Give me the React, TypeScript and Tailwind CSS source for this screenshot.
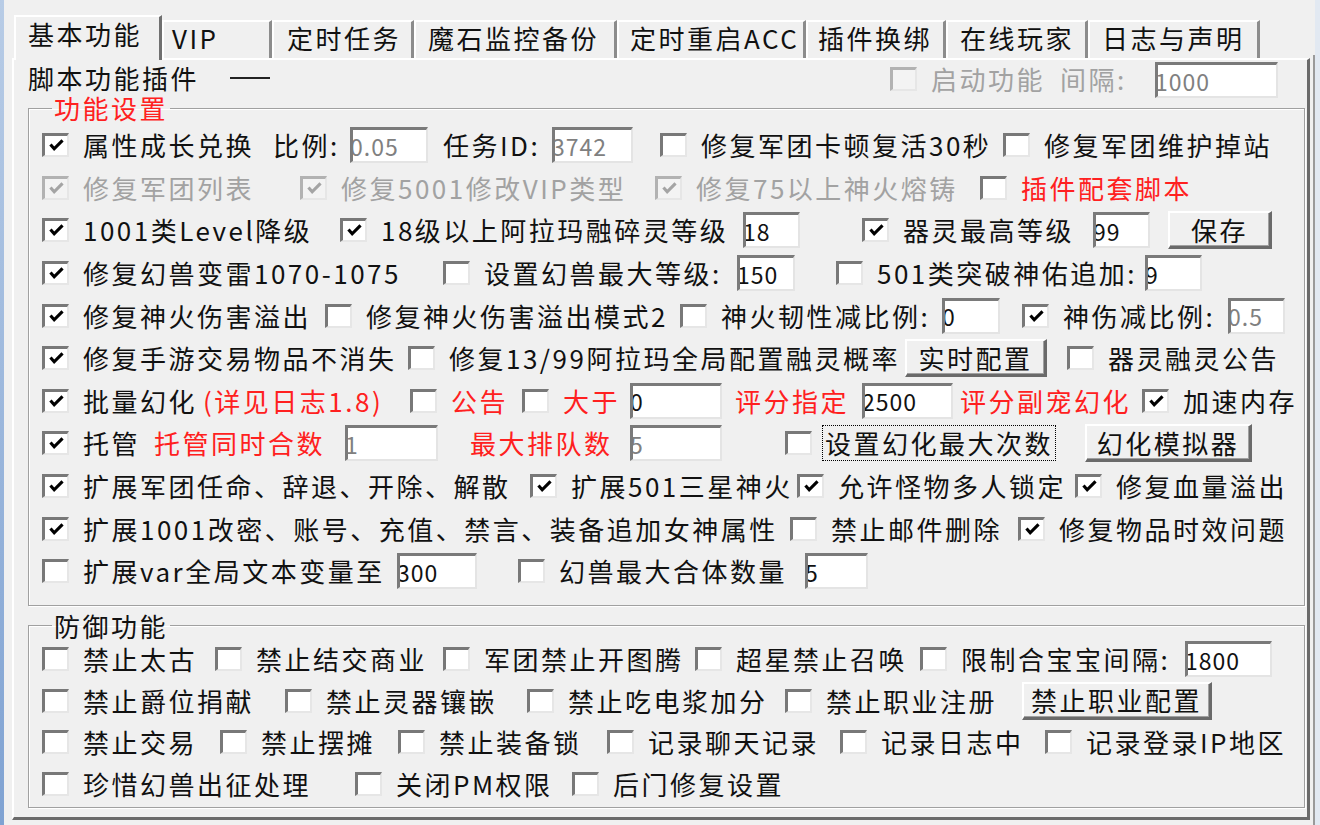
import type { ReactNode } from 'react';

const Box = ({ on, dis }: { on?: boolean; dis?: boolean }) => (
  <span
    className={`flex h-[24px] w-[27px] shrink-0 items-center justify-center border-t-[3px] border-l-[3px] border-r-2 border-b-2 border-r-[#e6e6e6] border-b-[#e6e6e6] ${
      dis ? 'border-t-[#b2b2b2] border-l-[#b2b2b2] bg-[#f3f3f3]' : 'border-t-[#787878] border-l-[#787878] bg-white'
    }`}
  >
    {on && (
      <svg viewBox="0 0 16 14" className="h-[13px] w-[15px]">
        <path d="M1.5 6 L5.5 10.5 L14.5 1.5" fill="none" stroke={dis ? '#a4a4a4' : '#000'} strokeWidth="3.4" />
      </svg>
    )}
  </span>
);

const Chk = ({ w = '', on, dis, children }: { w?: string; on?: boolean; dis?: boolean; children: ReactNode }) => (
  <div className={`flex shrink-0 items-center ${w}`}>
    <Box on={on} dis={dis} />
    <span className={`ml-[14px] whitespace-nowrap ${dis ? 'text-[#a2a2a2]' : ''}`}>{children}</span>
  </div>
);

const C = ({ w, children }: { w: string; children?: ReactNode }) => (
  <div className={`flex shrink-0 items-center whitespace-nowrap ${w}`}>{children}</div>
);

const R = ({ children, className = '' }: { children: ReactNode; className?: string }) => (
  <span className={`whitespace-nowrap text-[#ff2020] ${className}`}>{children}</span>
);

const Field = ({ w, v, dim }: { w: string; v: string; dim?: boolean }) => (
  <span
    className={`flex h-[36px] shrink-0 items-center overflow-hidden border-t-[3px] border-l-[3px] border-r-2 border-b-2 border-t-[#7a7a7a] border-l-[#7a7a7a] border-r-[#e4e4e4] border-b-[#e4e4e4] bg-white text-[23px] tracking-[1px] ${
      dim ? 'text-[#808080]' : 'text-[#111]'
    } ${w}`}
  >
    <span className="-ml-[3px]">{v}</span>
  </span>
);

const Btn = ({ w, children }: { w: string; children: ReactNode }) => (
  <span
    className={`flex h-[38px] shrink-0 items-center justify-center border-t-2 border-l-2 border-r-[3px] border-b-[3px] border-t-white border-l-white border-r-[#6a6a6a] border-b-[#6a6a6a] bg-[#f0f0f0] shadow-[inset_-1px_-1px_0_#a0a0a0] ${w}`}
  >
    {children}
  </span>
);

const Row = ({ h, children }: { h: string; children: ReactNode }) => (
  <div className={`flex items-center ${h}`}>{children}</div>
);

const tabs = [
  { t: 'VIP', cls: 'w-[110px] pl-[8px]' },
  { t: '定时任务', cls: 'w-[142px] pl-[13px]' },
  { t: '魔石监控备份', cls: 'w-[203px] pl-[12px]' },
  { t: '定时重启ACC', cls: 'w-[189px] pl-[11px]' },
  { t: '插件换绑', cls: 'w-[140px] pl-[10px]' },
  { t: '在线玩家', cls: 'w-[142px] pl-[12px]' },
  { t: '日志与声明', cls: 'w-[172px] pl-[12px]' },
];

export default function App() {
  return (
    <div className="flex h-[825px] w-[1320px] overflow-hidden bg-[#f0f0f0] font-['Noto_Sans_CJK_SC','Noto_Sans',sans-serif] text-[26px] leading-[30px] tracking-[2.5px] text-[#111]">
      {/* window edge */}
      <div className="w-[4px] shrink-0 bg-gradient-to-b from-[#b8cce6] to-[#7fa2d2]" />

      <div className="ml-[8px] shrink-0 pt-[15px]">
        {/* tab strip */}
        <div className="flex h-[43px] items-end pl-[2px]">
          <div className="relative z-10 -mb-[2px] flex h-[45px] w-[148px] shrink-0 items-center border-t-2 border-l-2 border-r-[3px] border-t-white border-l-white border-r-[#707070] bg-[#f0f0f0] pl-[12px] pb-[9px]">
            基本功能
          </div>
          {tabs.map((tab) => (
            <div
              key={tab.t}
              className={`flex h-[38px] shrink-0 items-center whitespace-nowrap border-t-2 border-l-2 border-r-[3px] border-t-white border-l-white border-r-[#8c8c8c] pb-[5px] ${tab.cls}`}
            >
              {tab.t}
            </div>
          ))}
        </div>

        {/* tab panel */}
        <div className="h-[762px] w-[1298px] border-t-2 border-l-2 border-r-[3px] border-b-[3px] border-t-white border-l-white border-r-[#6a6a6a] border-b-[#6a6a6a] pt-[2px]">
          <div className="flex h-[36px] items-center pl-[14px]">
            <C w="w-[202px] pb-[5px]">脚本功能插件</C>
            <span className="mb-[4px] h-[2px] w-[40px] shrink-0 bg-[#222]" />
            <span className="w-[620px] shrink-0" />
            <Chk w="w-[170px] pb-[3px]" dis>
              启动功能
            </Chk>
            <C w="w-[95px] pb-[3px]">
              <span className="text-[#a2a2a2]">间隔:</span>
            </C>
            <Field w="w-[123px]" v="1000" dim />
          </div>

          {/* 功能设置 */}
          <fieldset className="ml-[14px] w-[1277px] border border-[#a0a0a0] pt-[6px] pb-[12px] pl-[13px] shadow-[1px_1px_0_#fff,inset_1px_1px_0_#fff]">
            <legend className="ml-[10px] px-[2px] leading-[20px] text-[#ff2020]">功能设置</legend>

            <Row h="h-[42.6px]">
              <Chk w="w-[231px]" on>
                属性成长兑换
              </Chk>
              <C w="w-[77px]">比例:</C>
              <C w="w-[93px]">
                <Field w="w-[78px]" v="0.05" dim />
              </C>
              <C w="w-[109px]">任务ID:</C>
              <C w="w-[108px]">
                <Field w="w-[81px]" v="3742" dim />
              </C>
              <Chk w="w-[343px]">修复军团卡顿复活30秒</Chk>
              <Chk>修复军团维护掉站</Chk>
            </Row>

            <Row h="h-[42.6px]">
              <Chk w="w-[258px]" on dis>
                修复军团列表
              </Chk>
              <Chk w="w-[355px]" on dis>
                修复5001修改VIP类型
              </Chk>
              <Chk w="w-[325px]" on dis>
                修复75以上神火熔铸
              </Chk>
              <Chk>
                <R>插件配套脚本</R>
              </Chk>
            </Row>

            <Row h="h-[42.6px]">
              <Chk w="w-[298px]" on>
                1001类Level降级
              </Chk>
              <Chk w="w-[403px]" on>
                18级以上阿拉玛融碎灵等级
              </Chk>
              <C w="w-[119px]">
                <Field w="w-[57px]" v="18" />
              </C>
              <Chk w="w-[231px]" on>
                器灵最高等级
              </Chk>
              <C w="w-[75px]">
                <Field w="w-[57px]" v="99" />
              </C>
              <Btn w="w-[104px]">保存</Btn>
            </Row>

            <Row h="h-[42.6px]">
              <Chk w="w-[401px]" on>
                修复幻兽变雷1070-1075
              </Chk>
              <Chk w="w-[294px]">设置幻兽最大等级:</Chk>
              <C w="w-[99px]">
                <Field w="w-[58px]" v="150" />
              </C>
              <Chk w="w-[309px]">501类突破神佑追加:</Chk>
              <Field w="w-[57px]" v="9" />
            </Row>

            <Row h="h-[42.6px]">
              <Chk w="w-[283px]" on>
                修复神火伤害溢出
              </Chk>
              <Chk w="w-[355px]">修复神火伤害溢出模式2</Chk>
              <Chk w="w-[262px]">神火韧性减比例:</Chk>
              <C w="w-[80px]">
                <Field w="w-[58px]" v="0" />
              </C>
              <Chk w="w-[206px]" on>
                神伤减比例:
              </Chk>
              <Field w="w-[57px]" v="0.5" dim />
            </Row>

            <Row h="h-[42.6px]">
              <Chk w="w-[366px]" on>
                修复手游交易物品不消失
              </Chk>
              <Chk w="w-[497px]">修复13/99阿拉玛全局配置融灵概率</Chk>
              <C w="w-[162px]">
                <Btn w="w-[142px]">实时配置</Btn>
              </C>
              <Chk>器灵融灵公告</Chk>
            </Row>

            <Row h="h-[42.6px]">
              <Chk w="w-[368px]" on>
                批量幻化<R className="ml-[6px]">(详见日志1.8)</R>
              </Chk>
              <Chk w="w-[112px]">
                <R>公告</R>
              </Chk>
              <Chk w="w-[108px]">
                <R>大于</R>
              </Chk>
              <C w="w-[105px]">
                <Field w="w-[92px]" v="0" />
              </C>
              <C w="w-[127px]">
                <R>评分指定</R>
              </C>
              <C w="w-[98px]">
                <Field w="w-[91px]" v="2500" />
              </C>
              <C w="w-[182px]">
                <R>评分副宠幻化</R>
              </C>
              <Chk on>加速内存</Chk>
            </Row>

            <Row h="h-[42.6px]">
              <Chk w="w-[303px]" on>
                托管<R className="ml-[14px]">托管同时合数</R>
              </Chk>
              <C w="w-[125px]">
                <Field w="w-[93px]" v="1" dim />
              </C>
              <C w="w-[160px]">
                <R>最大排队数</R>
              </C>
              <C w="w-[155px]">
                <Field w="w-[92px]" v="5" dim />
              </C>
              <div className="flex w-[300px] shrink-0 items-center">
                <Box />
                <span className="ml-[10px] whitespace-nowrap border border-dotted border-black px-[2px] leading-[34px]">
                  设置幻化最大次数
                </span>
              </div>
              <Btn w="w-[167px]">幻化模拟器</Btn>
            </Row>

            <Row h="h-[42.6px]">
              <Chk w="w-[488px]" on>
                扩展军团任命、辞退、开除、解散
              </Chk>
              <Chk w="w-[267px]" on>
                扩展501三星神火
              </Chk>
              <Chk w="w-[278px]" on>
                允许怪物多人锁定
              </Chk>
              <Chk on>修复血量溢出</Chk>
            </Row>

            <Row h="h-[42.6px]">
              <Chk w="w-[748px]" on>
                扩展1001改密、账号、充值、禁言、装备追加女神属性
              </Chk>
              <Chk w="w-[228px]">禁止邮件删除</Chk>
              <Chk on>修复物品时效问题</Chk>
            </Row>

            <Row h="h-[42.6px]">
              <Chk w="w-[355px]">扩展var全局文本变量至</Chk>
              <C w="w-[121px]">
                <Field w="w-[80px]" v="300" />
              </C>
              <Chk w="w-[287px]">幻兽最大合体数量</Chk>
              <Field w="w-[63px]" v="5" />
            </Row>
          </fieldset>

          {/* 防御功能 */}
          <fieldset className="mt-[10px] ml-[14px] w-[1277px] border border-[#a0a0a0] pt-[3px] pb-[2px] pl-[13px] shadow-[1px_1px_0_#fff,inset_1px_1px_0_#fff]">
            <legend className="ml-[10px] px-[2px] leading-[20px]">防御功能</legend>

            <Row h="h-[41.5px]">
              <Chk w="w-[173px]">禁止太古</Chk>
              <Chk w="w-[228px]">禁止结交商业</Chk>
              <Chk w="w-[252px]">军团禁止开图腾</Chk>
              <Chk w="w-[225px]">超星禁止召唤</Chk>
              <Chk w="w-[265px]">限制合宝宝间隔:</Chk>
              <Field w="w-[87px]" v="1800" />
            </Row>

            <Row h="h-[41.5px]">
              <Chk w="w-[243px]">禁止爵位捐献</Chk>
              <Chk w="w-[242px]">禁止灵器镶嵌</Chk>
              <Chk w="w-[258px]">禁止吃电浆加分</Chk>
              <Chk w="w-[237px]">禁止职业注册</Chk>
              <Btn w="w-[190px]">禁止职业配置</Btn>
            </Row>

            <Row h="h-[41.5px]">
              <Chk w="w-[178px]">禁止交易</Chk>
              <Chk w="w-[178px]">禁止摆摊</Chk>
              <Chk w="w-[209px]">禁止装备锁</Chk>
              <Chk w="w-[233px]">记录聊天记录</Chk>
              <Chk w="w-[205px]">记录日志中</Chk>
              <Chk>记录登录IP地区</Chk>
            </Row>

            <Row h="h-[41.5px]">
              <Chk w="w-[313px]">珍惜幻兽出征处理</Chk>
              <Chk w="w-[217px]">关闭PM权限</Chk>
              <Chk>后门修复设置</Chk>
            </Row>
          </fieldset>
        </div>
      </div>

      {/* right window edge */}
      <div className="ml-[3px] mt-[55px] h-[770px] w-[2px] shrink-0 bg-[#9a9a9a]" />
      <div className="flex-1 bg-[#e2e9f2]" />
    </div>
  );
}
